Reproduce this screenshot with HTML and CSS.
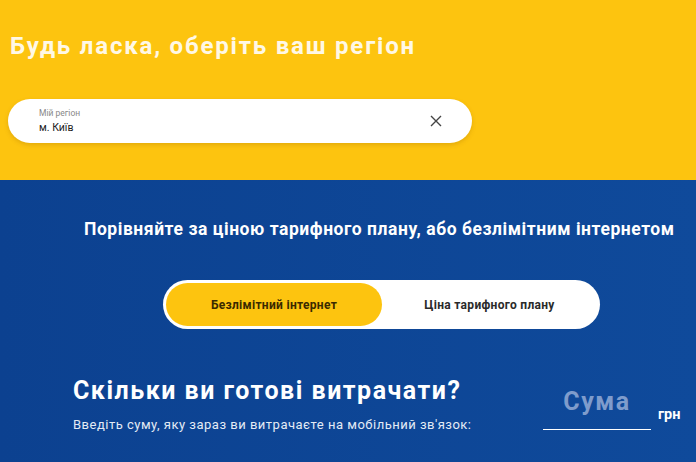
FILE: index.html
```html
<!DOCTYPE html>
<html lang="uk">
<head>
<meta charset="utf-8">
<link rel="stylesheet" href="styles.css">
</head>
<body>
<section class="region">
  <h1 class="region-title">Будь ласка, оберіть ваш регіон</h1>
  <div class="field">
    <div class="field-text">
      <span class="field-label">Мій регіон</span>
      <span class="field-value">м. Київ</span>
    </div>
    <svg class="field-clear" width="12" height="12" viewBox="0 0 12 12"><path d="M1 1 L11 11 M11 1 L1 11" stroke="#444" stroke-width="1.4" fill="none"/></svg>
  </div>
</section>
<section class="compare">
  <h2 class="compare-title">Порівняйте за ціною тарифного плану, або безлімітним інтернетом</h2>
  <div class="toggle">
    <div class="toggle-opt active">Безлімітний інтернет</div>
    <div class="toggle-opt">Ціна тарифного плану</div>
  </div>
  <div class="budget">
    <div class="budget-text">
      <h3 class="budget-title">Скільки ви готові витрачати?</h3>
      <p class="budget-sub">Введіть суму, яку зараз ви витрачаєте на мобільний зв'язок:</p>
    </div>
    <div class="budget-input">
      <div class="sum-field"><span class="sum-placeholder">Сума</span></div>
      <span class="currency">грн</span>
    </div>
  </div>
</section>
</body>
</html>
```
FILE: styles.css
```css
html, body {
  margin: 0;
  padding: 0;
}
body {
  width: 696px;
  height: 462px;
  overflow: hidden;
  font-family: Roboto, "Liberation Sans", sans-serif;
}
.region {
  background: #fdc40f;
  height: 180px;
  box-sizing: border-box;
  padding: 32px 0 0 8px;
}
.region-title {
  margin: 0 0 0 2px;
  color: #fff8e6;
  font-size: 24px;
  font-weight: 700;
  letter-spacing: 1.8px;
  line-height: 29px;
}
.field {
  margin-top: 38px;
  width: 464px;
  height: 44px;
  border-radius: 22px;
  background: #fff;
  box-shadow: 0 2px 4px rgba(150, 100, 0, 0.25);
  display: flex;
  align-items: center;
  box-sizing: border-box;
  padding: 0 30px 0 31px;
}
.field-text {
  flex: 1;
  display: flex;
  flex-direction: column;
  margin-top: 4px;
}
.field-label {
  font-size: 8.5px;
  color: #888;
  line-height: 10px;
  margin-top: -4px;
}
.field-value {
  font-size: 10.5px;
  color: #222;
  line-height: 14px;
  margin-top: 3px;
}
.field-clear {
  display: block;
}
.compare {
  height: 282px;
  background: linear-gradient(90deg, #0c4190 0%, #0f4a9b 100%);
  box-sizing: border-box;
  padding-top: 38px;
}
.compare-title {
  margin: 0 0 0 84px;
  color: #fff;
  font-size: 17.5px;
  font-weight: 700;
  line-height: 22px;
  letter-spacing: 0.55px;
}
.toggle {
  margin: 40px 0 0 163px;
  width: 437px;
  height: 49px;
  border-radius: 25px;
  background: #fff;
  box-sizing: border-box;
  padding: 3px;
  display: flex;
}
.toggle-opt {
  flex: 1;
  display: flex;
  align-items: center;
  justify-content: center;
  font-size: 12px;
  font-weight: 700;
  letter-spacing: 0.3px;
  color: #2a2a2a;
  border-radius: 22px;
}
.toggle-opt.active {
  flex: 0 0 216px;
  background: #fdc40f;
  color: #3a2a00;
}
.budget {
  display: flex;
  margin: 48px 0 0 73px;
}
.budget-text {
  width: 470px;
}
.budget-title {
  margin: 0;
  color: #fff;
  font-size: 25px;
  font-weight: 700;
  line-height: 28px;
  letter-spacing: 1.5px;
}
.budget-sub {
  margin: 11px 0 0;
  color: #e4ebf5;
  font-size: 13px;
  line-height: 17px;
  letter-spacing: 0.5px;
}
.budget-input {
  display: flex;
  align-items: flex-start;
}
.sum-field {
  width: 108px;
  height: 52px;
  border-bottom: 1.5px solid #fff;
  text-align: center;
}
.sum-placeholder {
  display: block;
  font-size: 25px;
  font-weight: 700;
  color: #7f9ccc;
  line-height: 32px;
  letter-spacing: 1.5px;
  margin-top: 9px;
}
.currency {
  margin: 29px 0 0 7px;
  color: #fff;
  font-size: 14.5px;
  font-weight: 700;
}
```
